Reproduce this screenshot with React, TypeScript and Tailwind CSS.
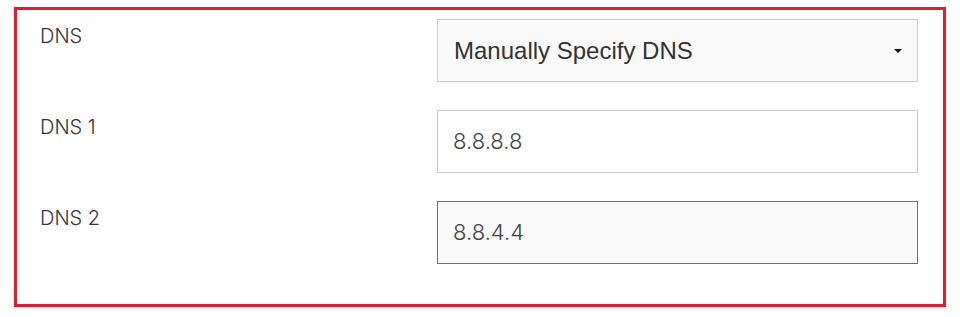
export default function App() {
    const labelCls = 'pt-[5px] text-[20px] leading-[24px] font-light text-[#333333]';
    return (
        <div className="w-[960px] h-[317px] bg-white pt-[7px] pl-[14px]">
            <div className="w-[932px] h-[300px] border-[3px] border-[#e8192b] pt-[9px] pl-[23px] pr-[25px] font-['Inter',sans-serif]">
                <div className="grid grid-cols-[397px_481px] gap-y-[28px]">
                    <div className={labelCls}>DNS</div>
                    <div className="h-[63px] border border-[#cccccc] bg-[#f9f9f9] flex items-center justify-between pl-[16px] pr-[15px]">
                        <span className="font-['Liberation_Sans',Arial,sans-serif] text-[24px] text-[#333333]">
                            Manually Specify DNS
                        </span>
                        <span className="w-0 h-0 border-x-[4px] border-x-transparent border-t-[4px] border-t-[#111111]" />
                    </div>

                    <div className={labelCls}>DNS 1</div>
                    <div className="h-[63px] flex items-center px-[15px] text-[22px] font-light text-[#444444] border border-[#cccccc] bg-white">
                        8.8.8.8
                    </div>

                    <div className={labelCls}>DNS 2</div>
                    <div className="h-[63px] flex items-center px-[15px] text-[22px] font-light text-[#444444] bg-[#f9f9f9] border border-[#22a04b]">
                        8.8.4.4
                    </div>
                </div>
            </div>
        </div>
    );
}
